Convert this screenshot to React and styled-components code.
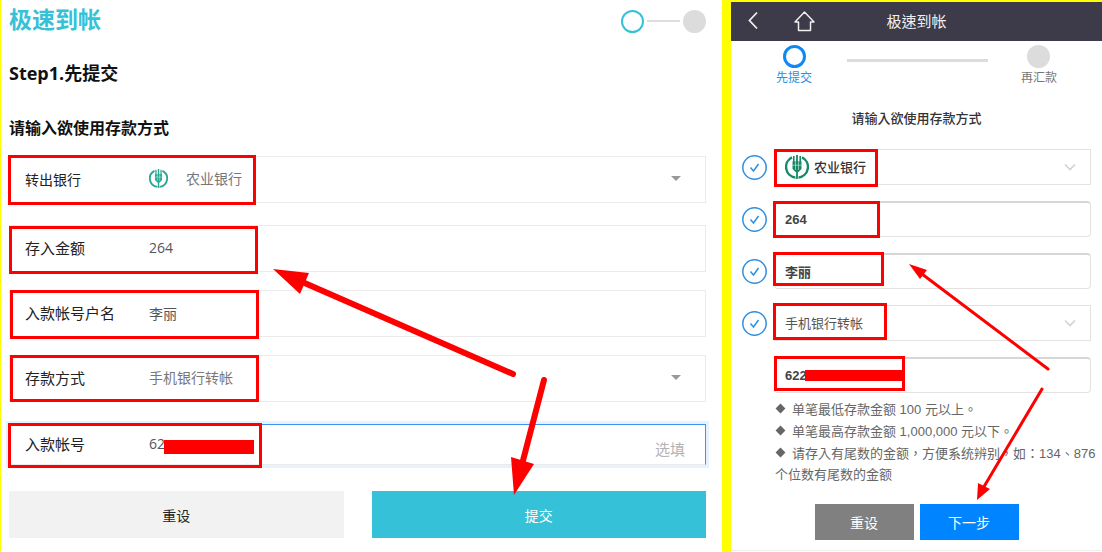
import { useId } from "react";
import styled, { createGlobalStyle } from "styled-components";

const GlobalStyle = createGlobalStyle`
    * {
        box-sizing: border-box;
    }

    body {
        margin: 0;
        background: #fff;
    }

    input, select, button {
        font-family: inherit;
    }
`;

const Page = styled.main`
    position: relative;
    display: grid;
    grid-template-columns: minmax(0, 361fr) minmax(0, 190fr);
    overflow: hidden;
`;

const DesktopPanel = styled.section`
    padding: 8px 16px 14px 8px;
    border-left: 1px solid #ffff00;
    font-family: "Open Sans", "Noto Sans CJK SC", sans-serif;
`;

const PanelHeader = styled.header`
    display: flex;
    justify-content: space-between;
    align-items: flex-start;
    height: 26px;
`;

const PanelTitle = styled.h1`
    margin: 0;
    color: #35c2d8;
    font-size: 23px;
    line-height: 22px;
`;

const Steps = styled.div`
    display: flex;
    align-items: center;
    gap: 3px;
    height: 26px;
`;

const StepDot = styled.span`
    width: 23px;
    height: 23px;
    border: ${({ $thickness }) => $thickness || 0}px solid ${({ $ring }) => $ring || "transparent"};
    border-radius: 50%;
    background: ${({ $ring }) => ($ring ? "#fff" : "#dcdcdc")};
`;

const StepLine = styled.span`
    width: 33px;
    height: 2px;
    background: #dedede;
`;

const StepHeading = styled.h2`
    margin: 27px 0 0;
    color: #111;
    font-size: 18px;
    line-height: 24px;
`;

const Hint = styled.h3`
    margin: 31px 0 16px;
    color: #111;
    font-size: 16px;
    line-height: 24px;
`;

const Fields = styled.div`
    display: flex;
    flex-direction: column;
    gap: 18px;
`;

const Field = styled.div`
    position: relative;
    display: flex;
    align-items: center;
    height: ${({ $active }) => ($active ? "41px" : "47px")};
    margin-bottom: ${({ $spaced }) => ($spaced ? "4px" : "0")};
    padding: 0 16px 2px 15px;
    border: 1px solid ${({ $active }) => ($active ? "#3c94ee" : "#ebebeb")};
    border-bottom-color: #ebebeb;
    box-shadow: ${({ $active }) => ($active ? "0 0 0 3px #e6f2ff" : "none")};
`;

const FieldLabel = styled.label`
    width: 124px;
    flex: none;
    color: #222;
    font-size: ${({ $small }) => ($small ? "14px" : "15px")};
`;

const Value = styled.input`
    flex: 1;
    min-width: 0;
    padding: 0;
    border: 0;
    outline: 0;
    background: none;
    color: #555;
    font-size: 14px;
`;

const Choice = styled.select`
    flex: 1;
    min-width: 0;
    padding: 0;
    border: 0;
    outline: 0;
    appearance: none;
    background: none;
    color: #777;
    font-size: 14px;
`;

const Optional = styled.span`
    padding: 10px 4px 0 0;
    color: #b3b3b3;
    font-size: 15px;
`;

const Caret = styled.span`
    margin-right: 8px;
    border: 5px solid transparent;
    border-top-color: #999;
    border-bottom: 0;
`;

const BankMark = styled.svg`
    flex: none;
    width: ${({ $size }) => $size}px;
    height: ${({ $size }) => $size}px;
    margin-right: ${({ $gap }) => $gap}px;
`;

const ButtonRow = styled.div`
    display: grid;
    grid-template-columns: 1fr 1fr;
    gap: 28px;
    margin-top: 26px;
`;

const WideButton = styled.button`
    height: 47px;
    border: 0;
    background: ${({ $primary }) => ($primary ? "#35c2d8" : "#f2f2f2")};
    color: ${({ $primary }) => ($primary ? "#fff" : "#222")};
    font-size: 14px;
`;

const MobilePanel = styled.section`
    border: solid #ffff00;
    border-width: 2px 0 0 9px;
    font-family: "Liberation Sans", "Noto Sans CJK TC", sans-serif;
    color: #444;
`;

const NavBar = styled.header`
    display: grid;
    grid-template-columns: 1fr auto 1fr;
    align-items: center;
    height: 39px;
    padding: 0 13px 2px;
    background: #3d3a49;
    color: #eee;
`;

const NavButtons = styled.div`
    display: flex;
    gap: 30px;
`;

const IconButton = styled.button`
    display: flex;
    padding: 0;
    border: 0;
    background: none;
    color: inherit;
`;

const NavTitle = styled.h2`
    margin: 0;
    font-size: 15px;
    font-weight: 400;
`;

const MobileSteps = styled.div`
    display: flex;
    justify-content: space-between;
    padding: 4px 45px 0;
`;

const MobileStep = styled.div`
    display: flex;
    flex-direction: column;
    align-items: center;
    color: ${({ $active }) => ($active ? "#2a8fe6" : "#777")};
    font-size: 12px;
    line-height: 21px;
`;

const MobileLine = styled.span`
    flex: 1;
    height: 3px;
    margin: 14px 33px 0 35px;
    background: #dcdcdc;
`;

const MobileHint = styled.h3`
    margin: 20px 0;
    font-size: 13px;
    line-height: 20px;
    font-weight: 500;
    text-align: center;
    color: #333;
`;

const MobileFields = styled.div`
    display: flex;
    flex-direction: column;
    gap: 16px;
    padding: 0 11px;
`;

const MobileRow = styled.div`
    display: grid;
    grid-template-columns: 25px 1fr;
    align-items: center;
    gap: 7px;
`;

const MobileField = styled.div`
    position: relative;
    grid-column: 2;
    display: flex;
    align-items: center;
    height: 36px;
    padding: 0 14px 0 10px;
    border: 1px solid #e2e2e2;
    ${({ $rounded }) => $rounded && `
        border-top: 2px solid #d6d6d6;
        border-radius: 4px;
    `}
`;

const MobileValue = styled(Value)`
    color: #444;
    font-size: 13px;
    font-weight: 700;
`;

const MobileChoice = styled(Choice)`
    color: ${({ $strong }) => ($strong ? "#333" : "#555")};
    font-size: 13px;
    font-weight: ${({ $strong }) => ($strong ? 500 : 400)};
`;

const Notes = styled.ul`
    margin: 6px 0 0;
    padding: 0 0 0 44px;
    list-style: none;
    color: #666;
    font-size: 13px;
    line-height: 21px;
`;

const Note = styled.li`
    margin-bottom: 1px;
`;

const Diamond = styled.span`
    display: inline-block;
    width: 7px;
    height: 7px;
    margin: 0 8px 2px 2px;
    background: #666;
    transform: rotate(45deg);
`;

const MobileButtons = styled.div`
    display: flex;
    justify-content: center;
    gap: 6px;
    margin-top: 19px;
    padding-bottom: 10px;
    border-bottom: 1px solid #eee;
`;

const SmallButton = styled.button`
    width: 99px;
    height: 36px;
    border: 0;
    background: ${({ $primary }) => ($primary ? "#0084ff" : "#808080")};
    color: #fff;
    font-size: 14px;
`;

// red frame laid over a field, [left, top, width, height] from the field's edge
const Frame = styled.span`
    position: absolute;
    left: ${({ $box }) => $box[0]}px;
    top: ${({ $box }) => $box[1]}px;
    width: ${({ $box }) => $box[2]}px;
    height: ${({ $box }) => $box[3]}px;
    border: 3px solid #ff0000;
    pointer-events: none;
`;

const Redaction = styled(Frame)`
    border: 0;
    background: #ff0000;
`;

const Arrows = styled.svg`
    position: absolute;
    inset: 0;
    width: 100%;
    height: 100%;
    pointer-events: none;
`;

function BankLogo({ size, gap, color }) {
    return (
        <BankMark $size={size} $gap={gap} viewBox="0 0 24 24" fill="none" stroke={color} aria-hidden="true">
            <path d="M7 2.400A10.700 10.700 0 0 0 10.500 22.600M17 2.400A10.700 10.700 0 0 1 13.500 22.600" strokeWidth="2.400" />
            <path d="M12 0v24" strokeWidth="1.800" />
            <path d="M8.800 1v7M15.200 1v7" strokeWidth="1.600" />
            <path d="M7.500 6.500h9v7.500l-3 3h-3l-3-3z" fill={color} stroke="none" />
            <path d="M7.500 10.200h9M10.500 7v8M13.500 7v8" stroke="#fff" strokeWidth="0.500" />
        </BankMark>
    );
}

function Tick() {
    return (
        <svg width="25" height="25" viewBox="0 0 25 25" fill="none" stroke="#2f8fe3" aria-hidden="true">
            <circle cx="12.5" cy="12.5" r="11.7" strokeWidth="1.5" />
            <path d="M8.500 12.500l3 3.500 5-7" strokeWidth="1.5" />
        </svg>
    );
}

function Chevron() {
    return (
        <svg width="12" height="8" viewBox="0 0 12 8" fill="none" stroke="#d2d2d2" strokeWidth="1.6" aria-hidden="true">
            <path d="M1 1.5l5 5 5-5" />
        </svg>
    );
}

function DesktopField({ label, value, small, spaced, select, logo, active, box, children }) {
    const id = useId();

    return (
        <Field $spaced={spaced} $active={active}>
            <FieldLabel htmlFor={id} $small={small}>{label}</FieldLabel>
            {logo && <BankLogo size={19} gap={18} color="#27a994" />}
            {select ? (
                <>
                    <Choice id={id}><option>{value}</option></Choice>
                    <Caret />
                </>
            ) : (
                <Value id={id} defaultValue={value} />
            )}
            {children}
            <Frame $box={box} />
        </Field>
    );
}

function MobileEntry({ label, value, select, logo, ticked, box, children }) {
    return (
        <MobileRow>
            {ticked && <Tick />}
            <MobileField $rounded={!select}>
                {logo && <BankLogo size={24} gap={5} color="#168a68" />}
                {select ? (
                    <>
                        <MobileChoice aria-label={label} $strong={logo}><option>{value}</option></MobileChoice>
                        <Chevron />
                    </>
                ) : (
                    <MobileValue aria-label={label} defaultValue={value} />
                )}
                {children}
                <Frame $box={box} />
            </MobileField>
        </MobileRow>
    );
}

function App() {
    return (
        <Page>
            <GlobalStyle />
            <DesktopPanel>
                <PanelHeader>
                    <PanelTitle>极速到帐</PanelTitle>
                    <Steps>
                        <StepDot $ring="#35c2d8" $thickness={2} />
                        <StepLine />
                        <StepDot />
                    </Steps>
                </PanelHeader>
                <StepHeading>Step1.先提交</StepHeading>
                <Hint>请输入欲使用存款方式</Hint>
                <Fields>
                    <DesktopField label="转出银行" value="农业银行" small spaced select logo box={[-2, -2, 248, 50]} />
                    <DesktopField label="存入金额" value="264" box={[-1, 0, 249, 48]} />
                    <DesktopField label="入款帐号户名" value="李丽" box={[0, -1, 249, 49]} />
                    <DesktopField label="存款方式" value="手机银行转帐" spaced select box={[0, -1, 249, 47]} />
                    <DesktopField label="入款帐号" value="62" active box={[-2, -2, 254, 45]}>
                        <Optional>选填</Optional>
                        <Redaction $box={[154, 15, 90, 14]} />
                    </DesktopField>
                </Fields>
                <ButtonRow>
                    <WideButton type="button">重设</WideButton>
                    <WideButton type="button" $primary>提交</WideButton>
                </ButtonRow>
            </DesktopPanel>

            <MobilePanel>
                <NavBar>
                    <NavButtons>
                        <IconButton type="button" aria-label="返回">
                            <svg width="18" height="20" viewBox="0 0 18 20" fill="none" stroke="currentColor" strokeWidth="1.8">
                                <path d="M13 2.5L5.5 10.5l7.5 8" />
                            </svg>
                        </IconButton>
                        <IconButton type="button" aria-label="首页">
                            <svg width="24" height="22" viewBox="0 0 24 22" fill="none" stroke="currentColor" strokeWidth="1.5">
                                <path d="M12.500 2L3 12h3.500v8.500h12V12H22z" strokeLinejoin="round" />
                            </svg>
                        </IconButton>
                    </NavButtons>
                    <NavTitle>极速到帐</NavTitle>
                </NavBar>
                <MobileSteps>
                    <MobileStep $active>
                        <StepDot $ring="#0f88f5" $thickness={3} />
                        先提交
                    </MobileStep>
                    <MobileLine />
                    <MobileStep>
                        <StepDot />
                        再汇款
                    </MobileStep>
                </MobileSteps>
                <MobileHint>请输入欲使用存款方式</MobileHint>
                <MobileFields>
                    <MobileEntry label="转出银行" value="农业银行" select logo ticked box={[-1, -1, 104, 38]} />
                    <MobileEntry label="存入金额" value="264" ticked box={[-2, -2, 107, 37]} />
                    <MobileEntry label="入款帐号户名" value="李丽" ticked box={[-2, -3, 111, 34]} />
                    <MobileEntry label="存款方式" value="手机银行转帐" select ticked box={[-2, -3, 114, 37]} />
                    <MobileEntry label="入款帐号" value="622" box={[-1, -3, 131, 35]}>
                        <Redaction $box={[30, 11, 97, 11]} />
                    </MobileEntry>
                </MobileFields>
                <Notes>
                    <Note><Diamond />单笔最低存款金额 100 元以上。</Note>
                    <Note><Diamond />单笔最高存款金额 1,000,000 元以下。</Note>
                    <Note><Diamond />请存入有尾数的金额，方便系统辨别，如：134、876 个位数有尾数的金额</Note>
                </Notes>
                <MobileButtons>
                    <SmallButton type="button">重设</SmallButton>
                    <SmallButton type="button" $primary>下一步</SmallButton>
                </MobileButtons>
            </MobilePanel>

            <Arrows viewBox="0 0 1102 552" fill="#ff0000" stroke="#ff0000" strokeLinecap="round" aria-hidden="true">
                <path d="M513 374L300 281M544 380L520 472" strokeWidth="6" />
                <path d="M1048 369L918 271M1042 389L982 490" strokeWidth="3" />
                <path d="M273 269l36 4-9 21zM511 457l23 7-20 31zM909 264l18 6-7 9zM977 500l1-17 12 6z" stroke="none" />
            </Arrows>
        </Page>
    );
}

export default App;
